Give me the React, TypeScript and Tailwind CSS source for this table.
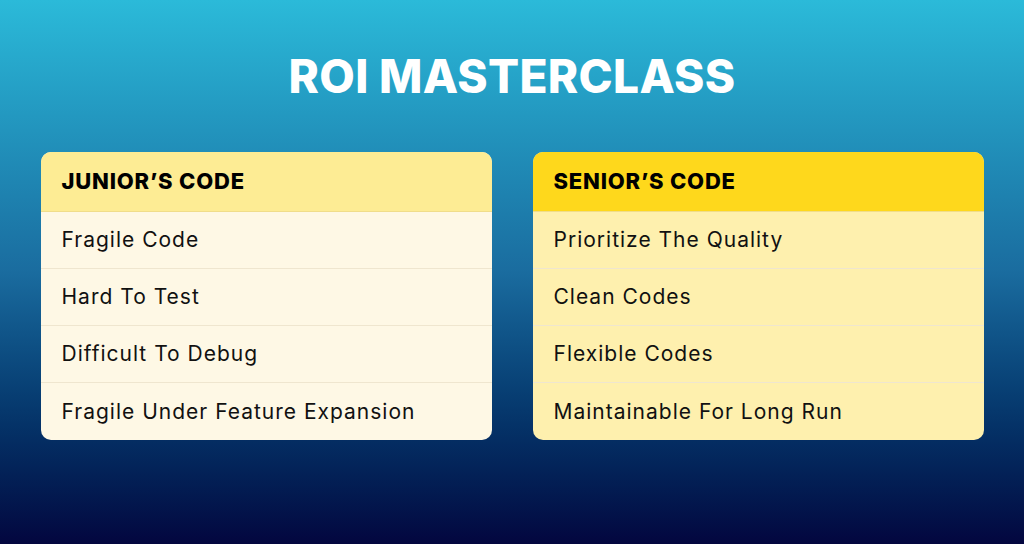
const junior = ['Fragile Code', 'Hard To Test', 'Difficult To Debug', 'Fragile Under Feature Expansion']
const senior = ['Prioritize The Quality', 'Clean Codes', 'Flexible Codes', 'Maintainable For Long Run']

function CodeCard({
  title,
  items,
  headBg,
  rowBg,
}: {
  title: string
  items: string[]
  headBg: string
  rowBg: string
}) {
  return (
    <div className={`w-[451px] rounded-[10px] overflow-hidden ${rowBg}`}>
      <div className={`h-[60px] flex items-center px-[21px] border-b border-[#f0dd8a] ${headBg}`}>
        <h2 className="text-[22px] font-extrabold text-black tracking-[0.8px]">{title}</h2>
      </div>
      {items.map((item, i) => (
        <div
          key={item}
          className={`h-[57px] flex items-center px-[21px] ${i < items.length - 1 ? 'border-b border-[#efe6cf]' : ''}`}
        >
          <span className="text-[21px] text-[#111] tracking-[1px]">{item}</span>
        </div>
      ))}
    </div>
  )
}

export default function App() {
  return (
    <div
      className="w-[1024px] h-[544px] flex flex-col items-center bg-gradient-to-b from-[#2bbad9] via-[#1a6c9f] to-[#03063f]"
      style={{ fontFamily: 'Inter, "Noto Sans", sans-serif' }}
    >
      <h1 className="mt-[50px] text-[46px] leading-[52px] font-extrabold text-white tracking-[0.3px]">
        ROI MASTERCLASS
      </h1>
      <div className="mt-[50px] flex gap-[41px]">
        <CodeCard title="JUNIOR’S CODE" items={junior} headBg="bg-[#fdec94]" rowBg="bg-[#fef8e5]" />
        <CodeCard title="SENIOR’S CODE" items={senior} headBg="bg-[#fed81c]" rowBg="bg-[#fef0ae]" />
      </div>
    </div>
  )
}
